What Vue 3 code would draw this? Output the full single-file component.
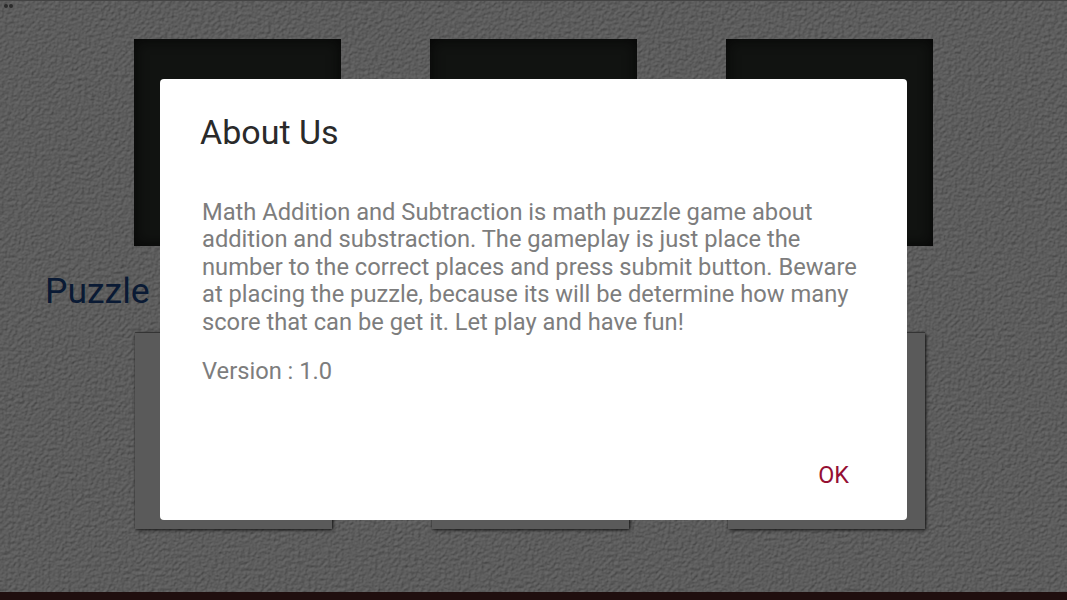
<script setup>
const topTiles = [1, 2, 3]
const bottomTiles = [1, 2, 3]
</script>

<template>
  <div class="screen">
    <svg class="texture" width="1067" height="600" aria-hidden="true">
      <filter id="paper" x="0" y="0" width="100%" height="100%" color-interpolation-filters="sRGB">
        <feTurbulence type="fractalNoise" baseFrequency="0.3" numOctaves="3" seed="7" result="noise" />
        <feDiffuseLighting in="noise" surfaceScale="0.75" diffuseConstant="1" lighting-color="#6b6b6b">
          <feDistantLight azimuth="235" elevation="60" />
        </feDiffuseLighting>
      </filter>
      <rect width="1067" height="600" filter="url(#paper)" />
    </svg>

    <div class="game">
      <div class="status">
        <span class="dot"></span>
        <span class="dot"></span>
      </div>
      <div class="tiles top">
        <div v-for="t in topTiles" :key="t" class="tile-dark"></div>
      </div>
      <div class="label">Puzzle</div>
      <div class="tiles bottom">
        <div v-for="t in bottomTiles" :key="t" class="tile-gray"></div>
      </div>
      <div class="navbar"></div>
    </div>

    <div class="dialog">
      <h2 class="title">About Us</h2>
      <div class="body">
        <p class="message">Math Addition and Subtraction is math puzzle game about addition and substraction. The gameplay is just place the number to the correct places and press submit button. Beware at placing the puzzle, because its will be determine how many score that can be get it. Let play and have fun!</p>
        <p class="version">Version : 1.0</p>
      </div>
      <div class="actions">
        <span class="ok">OK</span>
      </div>
    </div>
  </div>
</template>

<style>
html, body { margin: 0; background: #5a5a5a; }
</style>

<style scoped>
.screen {
  position: relative;
  width: 1067px;
  height: 600px;
  overflow: hidden;
  font-family: Roboto, "Liberation Sans", sans-serif;
  background: #5a5a5a;
}
.texture {
  position: absolute;
  left: 0;
  top: 0;
}
.game {
  position: relative;
  height: 600px;
  display: flex;
  flex-direction: column;
  border-top: 1px solid #444;
  box-sizing: border-box;
}
.status {
  height: 11px;
  padding: 3px 0 0 4px;
  box-sizing: border-box;
  display: flex;
  gap: 1px;
}
.dot {
  width: 4px;
  height: 4px;
  border-radius: 50%;
  background: #2b2b2b;
}
.tiles {
  display: flex;
}
.top {
  margin-top: 27px;
  padding-left: 134px;
  gap: 89px;
}
.tile-dark {
  width: 207px;
  height: 207px;
  background: #111311;
  box-shadow: inset 0 0 14px #050505;
}
.label {
  margin: 24px 0 0 45px;
  height: 63px;
  font-size: 35.5px;
  line-height: 42px;
  font-weight: 400;
  color: #0a1a34;
}
.bottom {
  padding-left: 135px;
  gap: 99.5px;
}
.tile-gray {
  width: 197px;
  height: 196px;
  background: #5a5a5a;
  box-shadow: 1px 1px 3px #111, 0 -1px 1px #3d3d3d;
}
.navbar {
  margin-top: auto;
  height: 8px;
  background: #1f0e0e;
}
.dialog {
  position: absolute;
  left: 160px;
  top: 79px;
  width: 747px;
  height: 441px;
  box-sizing: border-box;
  padding: 32px 41px 0;
  background: #fff;
  border-radius: 4px;
  display: flex;
  flex-direction: column;
}
.title {
  margin: 0 0 0 -1px;
  font-size: 34px;
  line-height: 42px;
  font-weight: 400;
  color: #2a2a2a;
}
.body {
  margin: 46px 0 0 1px;
  font-size: 23.7px;
  line-height: 27.4px;
  color: #7d7d7d;
}
.message {
  margin: 0;
  width: 670px;
}
.version {
  margin: 22px 0 0;
}
.actions {
  margin-top: auto;
  padding: 0 17px 31px 0;
  display: flex;
  justify-content: flex-end;
}
.ok {
  font-size: 23.4px;
  line-height: 28px;
  color: #950f33;
}
</style>
